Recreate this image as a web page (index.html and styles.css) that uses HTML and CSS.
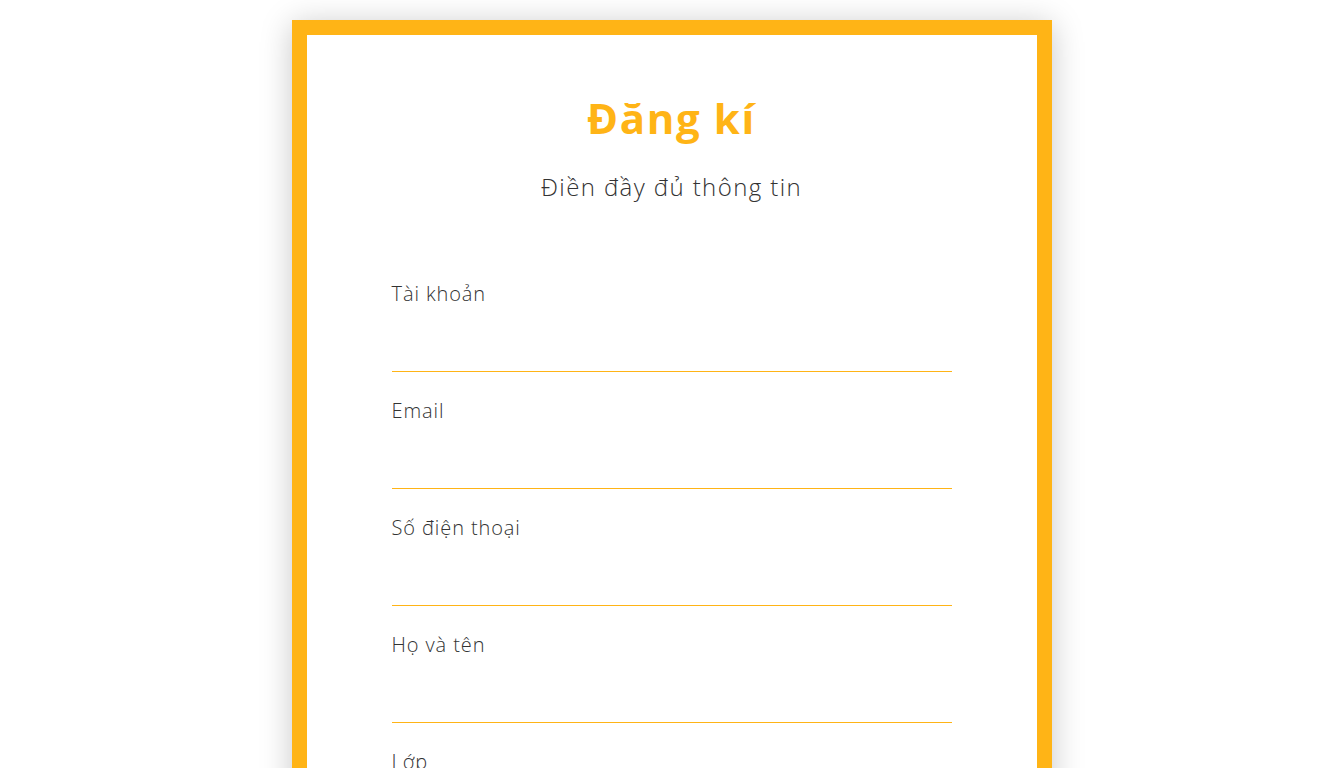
FILE: index.html
```html
<!DOCTYPE html>
<html lang="vi">
<head>
<meta charset="utf-8">
<title>Đăng kí</title>
<link rel="stylesheet" href="styles.css">
</head>
<body>
<div class="card">
  <div class="inner">
    <h1 class="title">Đăng kí</h1>
    <p class="subtitle">Điền đầy đủ thông tin</p>
    <form class="form">
      <div class="field"><label class="label">Tài khoản</label><input class="input" type="text"></div>
      <div class="field"><label class="label">Email</label><input class="input" type="text"></div>
      <div class="field"><label class="label">Số điện thoại</label><input class="input" type="text"></div>
      <div class="field"><label class="label">Họ và tên</label><input class="input" type="text"></div>
      <div class="field"><label class="label">Lớp</label><input class="input" type="text"></div>
    </form>
  </div>
</div>
</body>
</html>
```

FILE: styles.css
```css
html, body {
  margin: 0;
  padding: 0;
  background: #ffffff;
}
body {
  padding-left: 4px;
  font-family: "Open Sans", "Noto Sans", sans-serif;
  font-weight: 300;
  color: #333333;
}
.card {
  width: 730px;
  margin: 20px auto 0;
  border: 15px solid #ffb416;
  background: #ffffff;
  box-shadow: 0 4px 30px rgba(0, 0, 0, 0.22);
}
.inner {
  padding: 55px 85px 40px;
}
.title {
  margin: 0;
  text-align: center;
  font-size: 42px;
  line-height: 56px;
  font-weight: 700;
  letter-spacing: 1.6px;
  color: #ffb416;
}
.subtitle {
  margin: 26px 0 0;
  text-align: center;
  font-size: 24px;
  line-height: 30px;
  font-weight: 300;
  letter-spacing: 1.4px;
}
.form {
  margin-top: 79px;
  display: flex;
  flex-direction: column;
  gap: 26px;
}
.field {
  display: flex;
  flex-direction: column;
}
.label {
  font-size: 20px;
  line-height: 26px;
  letter-spacing: 0.9px;
}
.input {
  border: none;
  border-bottom: 1px solid #ffb416;
  height: 64px;
  padding: 0;
  outline: none;
  font-family: inherit;
  font-size: 20px;
  background: transparent;
}
```
